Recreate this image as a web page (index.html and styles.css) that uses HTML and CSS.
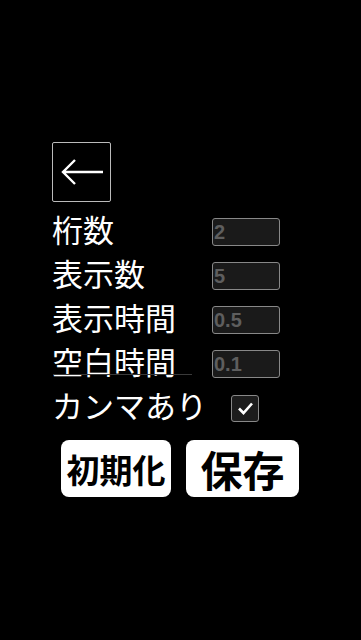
FILE: index.html
```html
<!DOCTYPE html>
<html>

<head>
    <meta charset="UTF-8">
    <title>設定</title>
    <link rel="stylesheet" href="styles.css">
</head>

<body>
    <div id="main">
        <div id="backBtn">
            <svg width="50" height="30" viewBox="0 0 50 30">
                <path d="M6 15 H46 M18 3 L6 15 L18 27" fill="none" stroke="#fff" stroke-width="2.4" />
            </svg>
        </div>
        <ul id="content">
            <li>
                <span class="show">桁数</span>
                <input type="text" class="showContent" value="2">
            </li>
            <li>
                <span class="show">表示数</span>
                <input type="text" class="showContent" value="5">
            </li>
            <li>
                <span class="show">表示時間</span>
                <input type="text" class="showContent" value="0.5">
            </li>
            <li class="line">
                <span class="show">空白時間</span>
                <input type="text" class="showContent" value="0.1">
            </li>
            <li>
                <span class="show">カンマあり</span>
                <span class="check">
                    <svg width="17" height="14" viewBox="0 0 17 14">
                        <path d="M2 7.5 L6.5 12 L15 2.5" fill="none" stroke="#fff" stroke-width="2.6" />
                    </svg>
                </span>
            </li>
        </ul>
        <div id="btns">
            <div class="btn small">初期化</div>
            <div class="btn big">保存</div>
        </div>
    </div>
</body>

</html>
```

FILE: styles.css
```css
body,
ul {
    margin: 0;
    padding: 0;
}

body {
    background-color: #000;
    font-family: "Noto Sans CJK JP", "Noto Sans", sans-serif;
}

ul {
    list-style-type: none;
}

#main {
    padding: 142px 0 0 52px;
}

#backBtn {
    width: 57px;
    height: 58px;
    border: 1px solid #bbb;
    border-radius: 2px;
    display: flex;
    align-items: center;
    justify-content: center;
}

#content {
    margin-top: 8px;
}

#content li {
    height: 44px;
    display: flex;
    align-items: center;
    position: relative;
}

#content li span.show {
    width: 160px;
    font-size: 31px;
    line-height: 38px;
    padding-bottom: 6px;
    color: #fff;
    white-space: nowrap;
}

#content li.line::after {
    content: "";
    position: absolute;
    left: 1px;
    top: 32px;
    width: 139px;
    height: 1px;
    background-color: #3a3a3a;
}

.showContent {
    box-sizing: border-box;
    width: 68px;
    height: 28px;
    border: 1px solid #888;
    border-radius: 3px;
    background-color: #1a1a1a;
    color: #5e5e5e;
    font-family: "Liberation Sans", sans-serif;
    font-weight: bold;
    font-size: 20px;
    padding: 0 1px;
    outline: none;
}

.check {
    box-sizing: border-box;
    margin-left: 19px;
    width: 28px;
    height: 27px;
    border: 1px solid #888;
    border-radius: 3px;
    background-color: #1c1c1c;
    display: flex;
    align-items: center;
    justify-content: center;
}

#btns {
    display: flex;
    gap: 15px;
    margin: 10px 0 0 9px;
}

.btn {
    background-color: #fff;
    border-radius: 8px;
    height: 57px;
    display: flex;
    align-items: center;
    justify-content: center;
    color: #000;
    font-weight: bold;
}

.btn.small {
    width: 110px;
    font-size: 33px;
}

.btn.big {
    width: 113px;
    font-size: 42px;
}
```
